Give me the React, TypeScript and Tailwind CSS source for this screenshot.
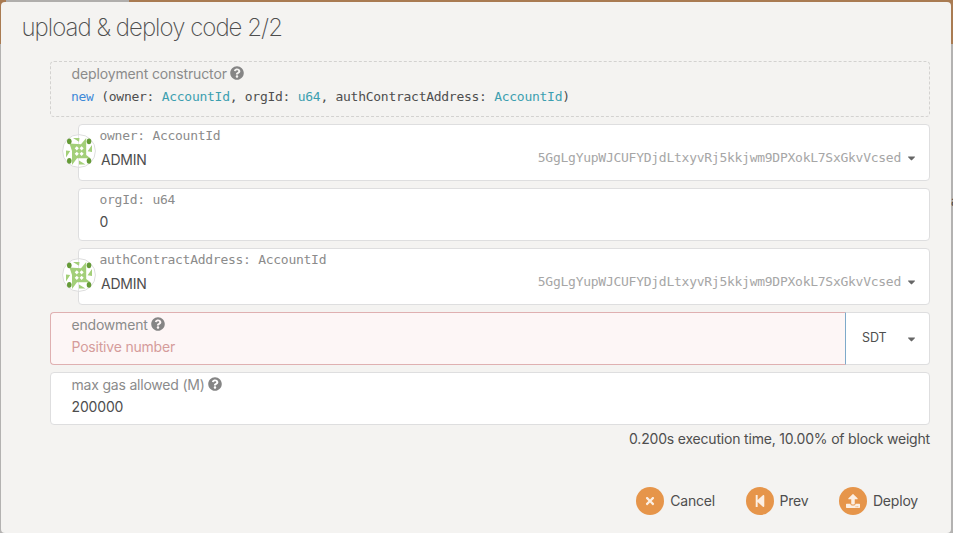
import type { ReactNode } from 'react';
import { FaCaretDown, FaQuestionCircle, FaStepBackward, FaTimes, FaUpload } from 'react-icons/fa';

const ADDRESS = '5GgLgYupWJCUFYDjdLtxyvRj5kkjwm9DPXokL7SxGkvVcsed';

function Identicon() {
  return (
    <svg className="absolute -left-[17px] top-[9px] h-[34px] w-[34px]" viewBox="0 0 34 34">
      <circle cx="17" cy="17" r="16.4" fill="#fff" stroke="#dddddd" />
      <path d="M16.5 0V34" stroke="#dddddd" opacity=".7" />
      <g fill="#a3cf79">
        <path d="M7.5 9.5L19 10.3L24.2 4V21L28.5 24.3H15L10 31V17Z" />
        <path d="M11 4H17.5L17 7.8ZM30 11V18L25.6 17.2ZM4 16.5L8.2 17L4 23.5ZM17 26.5L23.5 30.5L17 30.5Z" />
      </g>
      <g fill="#fff">
        <path d="M14.8 12.2L16.8 14.3L14.8 16.4L12.7 14.3ZM19.6 12.2L21.7 14.3L19.6 16.4L17.6 14.3ZM14.8 17.7L16.8 19.8L14.8 21.9L12.7 19.8ZM19.6 17.7L21.7 19.8L19.6 21.9L17.6 19.8Z" />
      </g>
      <g fill="#659b37">
        <ellipse cx="7.3" cy="7.3" rx="2.3" ry="2.9" />
        <ellipse cx="27" cy="7.3" rx="2.3" ry="2.9" />
        <ellipse cx="7.3" cy="26.8" rx="2.3" ry="2.9" />
        <ellipse cx="27" cy="26.8" rx="2.3" ry="2.9" />
      </g>
    </svg>
  );
}

function AccountField({ label }: { label: string }) {
  return (
    <div className="relative ml-7 flex h-[57px] justify-between rounded border border-[#dededf] bg-white pr-[13px]">
      <Identicon />
      <div className="pl-[20.5px]">
        <div className="mt-0.5 font-['DejaVu_Sans_Mono',monospace] text-[13px] leading-[17px] tracking-[-0.27px] text-[#8b8b8b]">{label}</div>
        <div className="mt-[7px] pl-[1.5px] text-[14px] leading-[18px] tracking-[-0.2px]">ADMIN</div>
      </div>
      <div className="mt-[25px] flex h-4 items-center font-['DejaVu_Sans_Mono',monospace] text-[13px] leading-4 tracking-[-0.26px] text-[#a6a6a6]">
        {ADDRESS}
        <FaCaretDown className="ml-1.5 h-3 w-[9px] text-[#666]" />
      </div>
    </div>
  );
}

function Help() {
  return <FaQuestionCircle className="-ml-px h-[14px] w-[14px] text-[#858585]" />;
}

function Action({ icon, label }: { icon: ReactNode; label: string }) {
  return (
    <div className="flex items-center gap-1.5 text-[14px] leading-5 tracking-[-0.2px]">
      <span className="flex h-7 w-7 items-center justify-center rounded-full bg-[#e6954a] text-[#fcefe3]">{icon}</span>
      {label}
    </div>
  );
}

export default function App() {
  return (
    <div className="h-[533px] w-[953px] overflow-hidden bg-[linear-gradient(#a97b52_44px,#b3b2b1_44px)] font-[Inter,sans-serif] text-[#4e4e4e]">
      <div className="flex h-0.5">
        <div className="w-1.5" />
        <div className="w-[123px] bg-[#b0aeac]" />
      </div>
      <div className="flex">
        <main className="ml-px h-[531px] w-[950px] rounded bg-[#f4f3f1]">
          <h1 className="h-[59px] pl-[20.5px] pt-[9.5px] text-[24px] font-extralight leading-[31px] tracking-[-0.97px] text-[#4e4e4e]">upload &amp; deploy code 2/2</h1>
          <div className="flex flex-col gap-[7px] pl-[49px] pr-[21px] text-[14px]">
            <div className="h-14 rounded border border-dashed border-[#d3d2d0] pl-[20px]">
              <div className="mt-[2px] flex h-[18px] items-center gap-1 pl-[.5px] tracking-[-0.13px] text-[#8b8b8b]">deployment constructor<Help /></div>
              <div className="mt-[7px] whitespace-pre font-['DejaVu_Sans_Mono',monospace] text-[13px] leading-4 tracking-[-0.27px]">
                <span className="text-[#3d89d8]">new</span> (owner: <span className="text-[#3c9fb0]">AccountId</span>, orgId: <span className="text-[#3c9fb0]">u64</span>, authContractAddress: <span className="text-[#3c9fb0]">AccountId</span>)
              </div>
            </div>
            <AccountField label="owner: AccountId" />
            <div className="ml-7 h-[53px] rounded border border-[#dededf] bg-white pl-[20.5px]">
              <div className="mt-0.5 font-['DejaVu_Sans_Mono',monospace] text-[13px] leading-[17px] tracking-[-0.27px] text-[#8b8b8b]">orgId: u64</div>
              <div className="mt-[5px] leading-[18px]">0</div>
            </div>
            <AccountField label="authContractAddress: AccountId" />
            <div className="flex h-[53px]">
              <div className="w-[796px] rounded-l border border-r-[#7eaaca] border-y-[#dfb0b1] border-l-[#dfb0b1] bg-[#fdf6f6] pl-[20.5px]">
                <div className="mt-[2px] flex h-[18px] items-center gap-1 tracking-[-0.2px] text-[#8b8b8b]">endowment<Help /></div>
                <div className="mt-[5px] leading-[18px] tracking-[-0.2px] text-[#d59c9b]">Positive number</div>
              </div>
              <div className="flex flex-1 items-center justify-between rounded-r border border-l-0 border-[#dededf] bg-white pl-4 pr-[13px] text-[12.5px] tracking-[-0.1px]">
                SDT<FaCaretDown className="h-3 w-[9px] text-[#666]" />
              </div>
            </div>
            <div className="h-[53px] rounded border border-[#dededf] bg-white pl-[20.5px]">
              <div className="mt-[2px] flex h-[18px] items-center gap-1 tracking-[-0.2px] text-[#8b8b8b]">max gas allowed (M)<Help /></div>
              <div className="mt-[5px] leading-[18px] tracking-[-0.15px]">200000</div>
            </div>
            <div className="-mt-[3px] text-right leading-5 tracking-[-0.19px]">0.200s execution time, 10.00% of block weight</div>
          </div>
          <div className="mt-[38px] flex justify-end gap-[30.5px] pr-[33px]">
            <Action icon={<FaTimes className="h-3 w-3" />} label="Cancel" />
            <Action icon={<FaStepBackward className="h-3.5 w-3" />} label="Prev" />
            <Action icon={<FaUpload className="h-3.5 w-3.5" />} label="Deploy" />
          </div>
        </main>
        <div className="mt-[191px] h-4 w-0.5 overflow-hidden text-[13px] leading-4">a</div>
      </div>
    </div>
  );
}
